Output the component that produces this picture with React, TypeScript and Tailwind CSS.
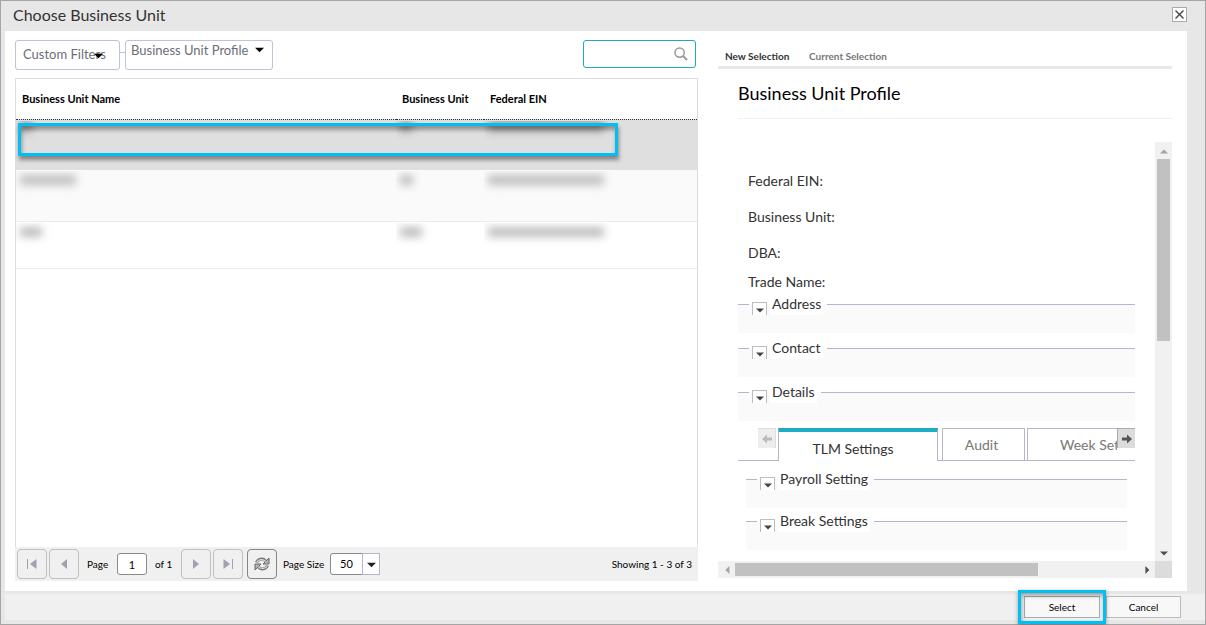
import type { ReactNode } from "react";

function Triangle({ dir, className }: { dir: "up" | "down" | "left" | "right"; className: string }) {
  const points = {
    up: "0,8 5,3 10,8",
    down: "0,3 10,3 5,8",
    left: "8,0 3,5 8,10",
    right: "3,0 8,5 3,10",
  }[dir];
  return (
    <svg viewBox="0 0 10 10" className={className} aria-hidden="true">
      <polygon points={points} fill="currentColor" />
    </svg>
  );
}

function PagerButton({ label, strong, children }: { label: string; strong?: boolean; children: ReactNode }) {
  return (
    <button
      type="button"
      aria-label={label}
      className={`flex size-[30px] shrink-0 items-center justify-center rounded border ${
        strong ? "border-[#858585]" : "border-[#c0c0c0]"
      }`}
    >
      {children}
    </button>
  );
}

function Section({ title }: { title: string }) {
  return (
    <fieldset className="min-w-0 border-t border-[#b3b6cc] bg-[#fafafa]">
      <legend className="ml-[11px] flex h-[22px] items-end pr-1 pl-[3px]">
        <button
          type="button"
          aria-label={`Expand ${title}`}
          className="flex h-[13px] w-[15px] items-center justify-center border border-b-0 border-[#bdbdbd] bg-white text-[#444]"
        >
          <Triangle dir="down" className="mt-0.5 size-[8px]" />
        </button>
        <span className="ml-[3px] h-[22px] bg-white px-0.5 text-[14px] leading-[22px] text-[#333]">{title}</span>
      </legend>
      <div className="h-[18px]" />
    </fieldset>
  );
}

function Smudge({ width, dark }: { width: string; dark?: boolean }) {
  return (
    <div className="h-[24px] overflow-hidden px-1">
      <div className={`h-[10px] blur-[4px] ${width} ${dark ? "bg-[#979797]" : "mt-1 bg-[#bdbdbd]"}`} />
    </div>
  );
}

const rows = [
  { id: "a", row: "h-[51px] bg-[#dfdfdf]", name: "w-[12px]", unit: "w-[12px]", ein: "w-[116px]", dark: true },
  { id: "b", row: "h-[51px] border-b border-[#ebebeb] bg-[#fafafa]", name: "w-[56px]", unit: "w-[13px]", ein: "w-[116px]", dark: false },
  { id: "c", row: "h-[47px] border-b border-[#ebebeb]", name: "w-[22px]", unit: "w-[22px]", ein: "w-[116px]", dark: false },
];

function Filters() {
  return (
    <div className="flex h-[30px] items-start text-[13px] text-[#6d6d78]">
      <div className="relative w-[105px]">
        <select aria-label="Custom Filters" className="h-[30px] w-full appearance-none rounded-[3px] border border-[#bcc3da] bg-white pl-[7px]">
          <option>Custom Filters</option>
        </select>
        <Triangle dir="down" className="pointer-events-none absolute top-[11px] left-[79px] size-[9px] text-black" />
      </div>
      <div className="mt-3 h-px w-[5px] bg-[#bcc3da]" />
      <div className="relative w-[148px]">
        <select aria-label="Profile" className="h-[30px] w-full appearance-none rounded-[3px] border border-[#bcc3da] bg-white pb-[11px] pl-[5px] leading-[16px]">
          <option>Business Unit Profile</option>
        </select>
        <Triangle dir="down" className="pointer-events-none absolute top-[5px] left-[130px] size-[9px] text-black" />
      </div>
      <div className="relative mr-0.5 ml-auto w-[113px]">
        <input type="search" aria-label="Search" className="h-[28px] w-full rounded-[3px] border border-[#1fa9bd] bg-white pr-7 pl-2 outline-none" />
        <svg viewBox="0 0 14 14" className="pointer-events-none absolute top-[7px] right-[8px] size-[14px]" fill="none" stroke="#9a9a9a" aria-hidden="true">
          <circle cx="5.6" cy="5.6" r="4.6" strokeWidth="1.5" />
          <path d="M9 9l4 4" strokeWidth="2" />
        </svg>
      </div>
    </div>
  );
}

function Grid() {
  return (
    <div className="mt-2 flex flex-1 flex-col">
      <div className="relative flex-1 border border-b-0 border-[#dcdcdc]">
        <table className="w-full table-fixed border-collapse text-left">
          <thead>
            <tr className="h-[40px] border-b border-dotted border-[#333] text-[11px] text-black">
              <th className="w-[380px] pl-1.5 font-bold">Business Unit Name</th>
              <th className="w-[88px] pl-1.5 font-bold">Business Unit</th>
              <th className="pl-1.5 font-bold">Federal EIN</th>
            </tr>
          </thead>
          <tbody>
            {rows.map((r) => (
              <tr key={r.id} className={r.row}>
                <td className="p-0 pt-px align-top"><Smudge width={r.name} dark={r.dark} /></td>
                <td className="p-0 pt-px align-top"><Smudge width={r.unit} dark={r.dark} /></td>
                <td className="p-0 pt-px align-top"><Smudge width={r.ein} dark={r.dark} /></td>
              </tr>
            ))}
          </tbody>
        </table>
        <div className="pointer-events-none absolute top-[44px] left-[2px] h-[33px] w-[600px] border-[3px] border-[#00bff3] shadow-[1px_4px_4px_rgba(0,0,0,0.4),inset_1px_4px_4px_rgba(0,0,0,0.35)]" />
      </div>
      <div className="flex h-[34px] items-center bg-[#f0f0f0] px-0.5 text-[10px] text-black">
        <div className="flex gap-0.5 text-[#a0a3ae]">
          <PagerButton label="First page">
            <svg viewBox="0 0 10 10" className="size-[10px]" fill="currentColor" aria-hidden="true"><path d="M0 0h1v10H0zM9.500 0v10L3 5z" /></svg>
          </PagerButton>
          <PagerButton label="Previous page">
            <svg viewBox="0 0 10 10" className="size-[10px]" fill="currentColor" aria-hidden="true"><path d="M8 0v10L2 5z" /></svg>
          </PagerButton>
        </div>
        <label htmlFor="page" className="ml-2 w-[30px]">Page</label>
        <input id="page" defaultValue="1" className="h-[22px] w-[30px] rounded-[3px] border border-[#8a8a8a] bg-white text-center text-[11px]" />
        <span className="ml-2 w-[26px]">of 1</span>
        <div className="flex gap-0.5 text-[#a0a3ae]">
          <PagerButton label="Next page">
            <svg viewBox="0 0 10 10" className="size-[10px]" fill="currentColor" aria-hidden="true"><path d="M2 0v10l6-5z" /></svg>
          </PagerButton>
          <PagerButton label="Last page">
            <svg viewBox="0 0 10 10" className="size-[10px]" fill="currentColor" aria-hidden="true"><path d="M9 0h1v10H9zM.5 0v10L7 5z" /></svg>
          </PagerButton>
        </div>
        <div className="ml-1">
          <PagerButton label="Refresh" strong>
            <svg viewBox="0 0 16 16" className="size-[16px]" aria-hidden="true">
              <path d="M2.500 6.500C3.800 3 9 1.800 11.500 5" fill="none" stroke="#777" strokeWidth="3" />
              <path d="M15 2v6H9z" fill="#b5b5b5" stroke="#666" strokeWidth="1" />
              <path d="M2.700 6.400C4 3.400 9 2.300 11.800 5.400" fill="none" stroke="#d8d8d8" strokeWidth="1.2" />
              <path d="M13.500 9.500C12.200 13 7 14.200 4.500 11" fill="none" stroke="#777" strokeWidth="3" />
              <path d="M1 14V8h6z" fill="#b5b5b5" stroke="#666" strokeWidth="1" />
              <path d="M13.300 9.600C12 12.600 7 13.700 4.200 10.600" fill="none" stroke="#d8d8d8" strokeWidth="1.2" />
            </svg>
          </PagerButton>
        </div>
        <label htmlFor="size" className="ml-1.5 w-[47px] whitespace-nowrap">Page Size</label>
        <div className="relative w-[50px]">
          <select id="size" className="h-[22px] w-full appearance-none rounded-l-[3px] border border-[#8a8a8a] bg-white pl-[9px] text-[11px]">
            <option>50</option>
          </select>
          <span className="pointer-events-none absolute inset-y-0 right-0 flex w-[18px] items-center justify-center border border-[#b3b6cc] bg-white text-[#222]">
            <Triangle dir="down" className="size-[9px]" />
          </span>
        </div>
        <span className="mr-1 ml-auto">Showing 1 - 3 of 3</span>
      </div>
    </div>
  );
}

function ArrowIcon({ flip, className }: { flip?: boolean; className: string }) {
  return (
    <svg viewBox="0 0 10 10" className={className} aria-hidden="true">
      <path d={flip ? "M0 5l5-4.500v3h5v3H5v3z" : "M10 5L5 .5v3H0v3h5v3z"} fill="currentColor" />
    </svg>
  );
}

function Profile() {
  return (
    <div className="flex min-w-0 flex-[454_1_0px] flex-col pt-[9px]">
      <div className="flex h-[29px] items-end border-b-[3px] border-[#e8e8e8] pb-0.5 pl-[7px] text-[10px] leading-[16px] font-bold">
        <button type="button" className="w-[84px] text-left text-[#333]">New Selection</button>
        <button type="button" className="text-left text-[#777]">Current Selection</button>
      </div>
      <h2 className="ml-5 h-[50px] border-b border-[#efefef] text-[18px] leading-[48px] text-black">Business Unit Profile</h2>
      <div className="mt-[23px] flex flex-1">
        <div className="min-w-0 flex-1 pr-5 pl-5">
          <dl className="pt-[21px] pl-2.5 text-[14px] leading-9 text-[#333]">
            <dt>Federal EIN:</dt>
            <dt>Business Unit:</dt>
            <dt>DBA:</dt>
            <dt className="leading-[22px]">Trade Name:</dt>
          </dl>
          <div className="flex flex-col gap-1">
            <Section title="Address" />
            <Section title="Contact" />
            <Section title="Details" />
          </div>
          <div className="mt-[7px] flex h-[33px] overflow-hidden text-[14px] text-[#777]">
            <div className="flex w-[40px] shrink-0 items-start justify-end border-b border-[#b3b6cc] pr-0.5">
              <button type="button" aria-label="Scroll tabs left" className="flex h-[20px] w-[18px] items-center justify-center border-t border-r border-[#ddd] bg-[#eee] text-[#bbb]">
                <ArrowIcon flip className="size-[10px]" />
              </button>
            </div>
            <button type="button" className="w-[160px] shrink-0 border-x border-t-4 border-x-[#b3b6cc] border-t-[#1fabc3] pt-[3px] pr-[10px] text-[#333]">TLM Settings</button>
            <div className="w-1 shrink-0 border-b border-[#b3b6cc]" />
            <button type="button" className="w-[83px] shrink-0 border border-[#b3b6cc] pr-1 text-center">Audit</button>
            <div className="w-0.5 shrink-0 border-b border-[#b3b6cc]" />
            <div className="flex min-w-0 flex-1 border-b border-l border-[#b3b6cc]">
              <button type="button" className="min-w-0 flex-1 overflow-hidden border-t border-[#b3b6cc] pl-8 text-left whitespace-nowrap">Week Settings</button>
              <button type="button" aria-label="Scroll tabs right" className="flex h-[20px] w-[18px] shrink-0 items-center justify-center border-t border-l border-[#aaa] bg-[#dcdcdc] text-[#555]">
                <ArrowIcon className="size-[10px]" />
              </button>
            </div>
          </div>
          <div className="mt-[7px] flex flex-col gap-0.5 px-2">
            <Section title="Payroll Setting" />
            <Section title="Break Settings" />
          </div>
        </div>
        <div className="flex w-[17px] flex-col items-center bg-[#f1f1f1]">
          <span className="flex h-[17px] items-center text-[#a3a3a3]"><Triangle dir="up" className="size-[8px]" /></span>
          <span className="h-[182px] w-[13px] bg-[#c1c1c1]" />
          <span className="mt-auto flex h-[17px] items-center text-[#505050]"><Triangle dir="down" className="size-[8px]" /></span>
        </div>
      </div>
      <div className="mb-[13px] flex h-[17px]">
        <div className="flex flex-1 items-center bg-[#f1f1f1]">
          <span className="flex w-[17px] justify-center text-[#a3a3a3]"><Triangle dir="left" className="size-[8px]" /></span>
          <span className="h-[13px] w-3/4 max-w-[303px] bg-[#c1c1c1]" />
          <span className="ml-auto flex w-[17px] justify-center text-[#505050]"><Triangle dir="right" className="size-[8px]" /></span>
        </div>
        <div className="w-[17px] bg-[#dcdcdc]" />
      </div>
    </div>
  );
}

export default function App() {
  return (
    <div className="flex min-h-screen flex-col border border-[#a5a5a5] bg-[#e7e7e7] pb-1 pl-1 font-['Lato',sans-serif]">
      <header className="flex h-[30px] items-start justify-between pr-[18px] pl-2">
        <h1 className="text-[16px] leading-[28px] text-[#333]">Choose Business Unit</h1>
        <button type="button" aria-label="Close" className="mt-1.5 flex size-[15px] items-center justify-center border border-[#aaa] bg-white">
          <svg viewBox="0 0 9 9" className="size-[9px]" stroke="#444" strokeWidth="1.4" aria-hidden="true"><path d="M.5.5l8 8M8.500.5l-8 8" /></svg>
        </button>
      </header>
      <main className="mr-[18px] flex flex-1 gap-5 bg-white pr-[15px] pl-2.5">
        <div className="flex min-w-0 flex-[683_1_0px] flex-col pt-[9px] pb-2.5">
          <Filters />
          <Grid />
        </div>
        <Profile />
      </main>
      <footer className="mt-[3px] flex h-[26px] items-center justify-end gap-1.5 bg-[#f0f0f0] pr-6 text-[10px] text-black">
        <div className="relative">
          <button type="button" className="block h-[22px] w-[76px] border border-[#aaa] bg-[#f8f8f8]">Select</button>
          <div className="pointer-events-none absolute top-[-6px] left-[-6px] h-[34px] w-[88px] border-[3px] border-[#00bff3] shadow-[0_1px_4px_rgba(0,0,0,0.35),inset_1px_3px_4px_rgba(0,0,0,0.3)]" />
        </div>
        <button type="button" className="h-[22px] w-[75px] border border-[#bbb] bg-[#f8f8f8]">Cancel</button>
      </footer>
    </div>
  );
}
